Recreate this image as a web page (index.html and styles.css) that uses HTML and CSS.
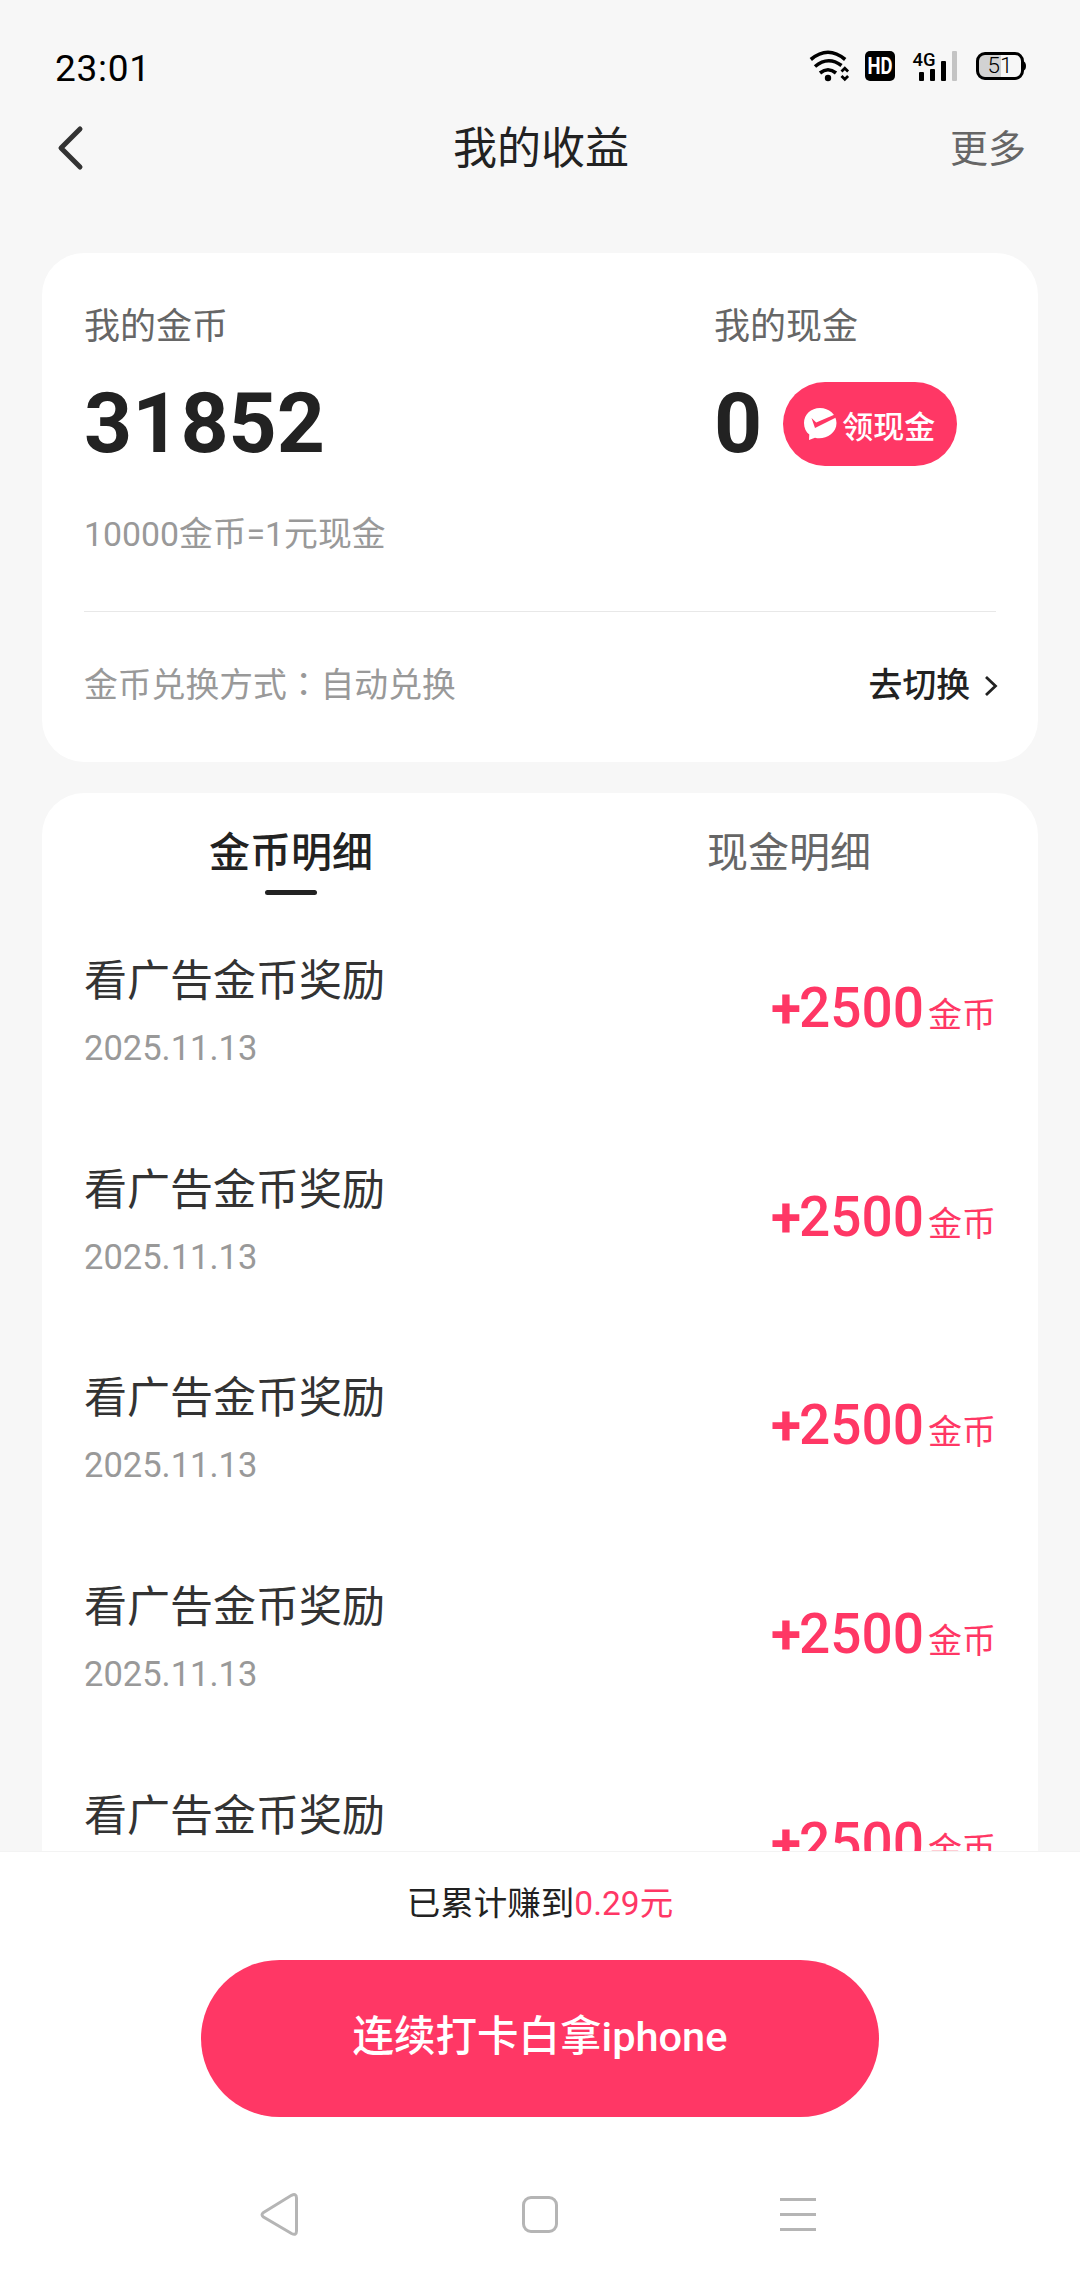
FILE: index.html
```html
<!DOCTYPE html>
<html lang="zh-CN">
<head>
<meta charset="utf-8">
<title>我的收益</title>
<link rel="stylesheet" href="styles.css">
</head>
<body>
<div class="screen">
  <div class="status-bar">
    <span class="clock">23:01</span>
    <svg class="status-icons" width="222" height="40" viewBox="806 46 222 40">
      <g fill="none" stroke="#000">
        <path d="M810.8 59.5Q828 45 845.2 59.5" stroke-width="3.6"/>
        <path d="M815 66.5Q828 55.5 841.5 65.5" stroke-width="3.6"/>
        <path d="M820 73Q828 66.500 836 73" stroke-width="3.6"/>
        <path d="M841.5 71.5L844.8 68.3L848.1 71.5M841.5 76L844.8 79.2L848.1 76" stroke-width="2.8"/>
      </g>
      <circle cx="828" cy="78" r="3.2"/>
      <rect x="865" y="51" width="30" height="30" rx="5"/>
      <text class="hd" x="867.5" y="74" textLength="25" lengthAdjust="spacingAndGlyphs">HD</text>
      <text class="net" x="912.5" y="65.5" textLength="23" lengthAdjust="spacingAndGlyphs">4G</text>
      <rect x="919" y="72" width="5" height="9" rx="1"/>
      <rect x="930" y="69" width="5" height="12" rx="1"/>
      <rect x="941" y="61" width="5" height="20" rx="1"/>
      <rect x="952" y="51" width="5" height="30" rx="1" fill="#c4c4c4"/>
      <path d="M985 54H1001V78H985Q978 78 978 71V61Q978 54 985 54Z" fill="#d2d2d2"/>
      <rect x="977.5" y="53.5" width="45" height="25" rx="7.5" fill="none" stroke="#000" stroke-width="3"/>
      <path d="M1023 61Q1026 62 1026 66Q1026 70 1023 71Z"/>
      <text class="level" x="987.5" y="73" textLength="25">51</text>
    </svg>
  </div>

  <header class="title-bar">
    <svg class="back" width="30" height="46" viewBox="0 0 30 46"><path d="M24 4L5 23L24 42"/></svg>
    <h1 class="title">我的收益</h1>
    <span class="more">更多</span>
  </header>

  <main class="content">
    <section class="card summary">
      <div class="balances">
        <div class="coins">
          <div class="label">我的金币</div>
          <div class="value">31852</div>
          <div class="rate">10000金币=1元现金</div>
        </div>
        <div class="cash">
          <div class="label">我的现金</div>
          <div class="cash-row">
            <span class="value">0</span>
            <span class="withdraw">
              <svg width="34" height="34" viewBox="0 0 34 34"><path fill="#fff" d="M17 1C8 1 1 7.6 1 16C1 21 3 25 6.3 27.6L6 33L12 30.7C21 33 33.5 27.5 33.5 16C33.5 7.6 26 1 17 1Z"/><path fill="#ff3765" d="M8.5 11L13.2 15.5L33 7V10.5L12 21Z"/></svg>
              <span>领现金</span>
            </span>
          </div>
        </div>
      </div>
      <div class="exchange">
        <span>金币兑换方式<span class="colon" lang="zh-TW">：</span>自动兑换</span>
        <span class="switch">去切换<svg width="14" height="22" viewBox="0 0 14 22"><path d="M2 2L11.5 11L2 20"/></svg></span>
      </div>
    </section>

    <section class="card details">
      <nav class="tabs">
        <span class="tab active">金币明细</span>
        <span class="tab">现金明细</span>
      </nav>
      <ul class="records">
        <li class="record"><div><div class="name">看广告金币奖励</div><div class="date">2025.11.13</div></div><div class="amount"><span class="plus">+</span>2500<span class="unit">金币</span></div></li>
        <li class="record"><div><div class="name">看广告金币奖励</div><div class="date">2025.11.13</div></div><div class="amount"><span class="plus">+</span>2500<span class="unit">金币</span></div></li>
        <li class="record"><div><div class="name">看广告金币奖励</div><div class="date">2025.11.13</div></div><div class="amount"><span class="plus">+</span>2500<span class="unit">金币</span></div></li>
        <li class="record"><div><div class="name">看广告金币奖励</div><div class="date">2025.11.13</div></div><div class="amount"><span class="plus">+</span>2500<span class="unit">金币</span></div></li>
        <li class="record"><div><div class="name">看广告金币奖励</div></div><div class="amount"><span class="plus">+</span>2500<span class="unit">金币</span></div></li>
      </ul>
    </section>
  </main>

  <footer class="bottom">
    <div class="earned">已累计赚到<span class="sum">0.29元</span></div>
    <div class="cta">连续打卡白拿iphone</div>
    <svg class="system-nav" width="1080" height="60" viewBox="0 0 1080 60">
      <g fill="none" stroke="#b5b5b5" stroke-width="3">
        <path d="M263.5 27.5L291.5 10.3Q296.5 8 296.5 13V46Q296.5 51 291.5 48.5L263.5 32Q260.5 29.7 263.5 27.5Z"/>
        <rect x="523.5" y="12.5" width="33" height="34" rx="7.5"/>
        <path d="M780 14.5H816M780 29.5H816M780 44.5H816"/>
      </g>
    </svg>
  </footer>
</div>
</body>
</html>
```
FILE: styles.css
```css
* { box-sizing: border-box; }

body {
  margin: 0;
  background: #f7f7f7;
  font-family: Roboto, "Noto Sans CJK SC", sans-serif;
  color: #222;
}

.screen {
  width: 1080px;
  height: 2280px;
  display: flex;
  flex-direction: column;
  overflow: hidden;
}

.status-bar {
  height: 108px;
  padding: 46px 52px 0 55px;
  display: flex;
  justify-content: space-between;
  align-items: flex-start;
}
.clock { font-size: 37px; line-height: 45px; letter-spacing: 0.7px; color: #000; }
.hd { font: 700 24px Roboto, sans-serif; fill: #fff; }
.net { font: 500 19px Roboto, sans-serif; }
.level { font: 300 22.5px Roboto, sans-serif; }

.title-bar {
  height: 80px;
  padding: 0 54px 0 56px;
  display: grid;
  grid-template-columns: 1fr auto 1fr;
  align-items: center;
}
.back path { fill: none; stroke: #333; stroke-width: 5; stroke-linecap: round; stroke-linejoin: round; }
.title { margin: 0; padding-top: 3px; font-size: 44px; font-weight: 400; line-height: 77px; }
.more { justify-self: end; padding-top: 2px; font-size: 38px; line-height: 78px; color: #666; }

.content {
  height: 1663px;
  padding: 65px 42px 0;
  display: flex;
  flex-direction: column;
  gap: 31px;
  overflow: hidden;
}
.card { flex: none; background: #fff; border-radius: 42px; }

.summary { height: 509px; padding: 0 42px; }
.balances {
  height: 359px;
  padding-top: 49px;
  display: grid;
  grid-template-columns: 630px 1fr;
  border-bottom: 1px solid #e8e8e8;
}
.label { font-size: 36px; line-height: 50px; color: #666; }
.value { font-size: 84px; font-weight: 700; line-height: 100px; }
.coins .value { margin-top: 22px; }
.rate { margin-top: 36px; font-size: 33.8px; line-height: 50px; color: #999; }
.cash-row { margin-top: 22px; display: flex; align-items: center; gap: 21px; }
.withdraw {
  width: 174px;
  height: 84px;
  padding-left: 20px;
  display: flex;
  align-items: center;
  gap: 5px;
  border-radius: 42px;
  background: #ff3765;
  color: #fff;
  font-size: 31px;
  font-weight: 500;
}
.exchange {
  height: 148px;
  display: flex;
  justify-content: space-between;
  align-items: center;
  font-size: 33.8px;
  line-height: 50px;
  color: #999;
}
.colon { font-family: "Noto Sans CJK TC", sans-serif; line-height: 1; }
.switch { display: flex; align-items: center; gap: 14px; margin-right: -2px; font-weight: 500; color: #222; }
.switch path { fill: none; stroke: #222; stroke-width: 2.8; }

.details { height: 1100px; }
.tabs { height: 124px; padding-top: 34px; display: grid; grid-template-columns: 1fr 1fr; }
.tab { display: flex; flex-direction: column; align-items: center; font-size: 41px; line-height: 52px; color: #666; }
.tab.active { font-weight: 500; color: #222; }
.tab.active::after { content: ""; width: 52px; height: 5px; margin-top: 11px; border-radius: 2.5px; background: #222; }

.records { margin: 0; padding: 0 42px; list-style: none; }
.record { height: 208.7px; padding-top: 36px; display: flex; justify-content: space-between; align-items: flex-start; }
.name { font-size: 43px; line-height: 56px; color: #333; }
.date { margin-top: 14px; font-size: 34.5px; line-height: 50px; color: #999; }
.amount { margin-top: 22px; font-size: 55px; font-weight: 500; line-height: 66px; color: #ff3765; }
.plus { font-weight: 700; letter-spacing: -2px; }
.unit { margin-left: 4px; font-size: 34px; font-weight: 400; }

.bottom {
  flex: 1;
  padding-top: 27px;
  display: flex;
  flex-direction: column;
  align-items: center;
  background: #fff;
  border-top: 1px solid #f3f3f3;
}
.earned { font-size: 33.5px; line-height: 50px; }
.sum { color: #ff3765; }
.cta {
  width: 678px;
  height: 157px;
  margin-top: 31px;
  border-radius: 78.5px;
  background: #ff3765;
  color: #fff;
  font-size: 41.5px;
  font-weight: 500;
  line-height: 154px;
  text-align: center;
}
.system-nav { margin-top: 68px; }
```
